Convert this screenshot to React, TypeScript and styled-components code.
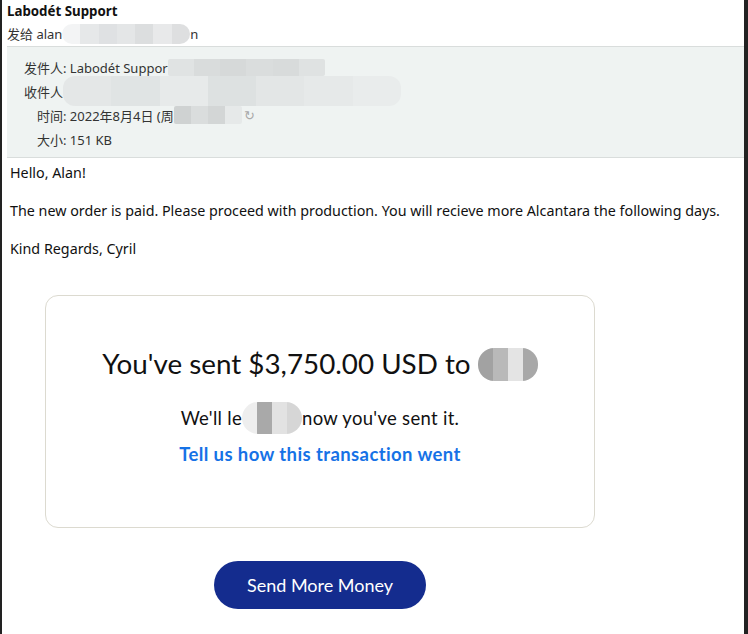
import React from 'react';
import styled, { createGlobalStyle } from 'styled-components';

const GlobalStyle = createGlobalStyle`
  html, body {
    margin: 0;
    padding: 0;
    background: #fff;
  }
  body {
    font-family: 'Noto Sans', 'Noto Sans CJK SC', sans-serif;
    color: #1a1a1a;
  }
`;

const Page = styled.div`
  height: 634px;
  box-sizing: border-box;
  border-left: 2px solid #222;
  border-right: 4px solid #222;
  background: #fff;
  overflow: hidden;
  display: flex;
  flex-direction: column;
`;

const MailHead = styled.div`
  padding: 0 0 0 5px;
`;

const SenderName = styled.div`
  font-size: 13.3px;
  font-weight: 700;
  line-height: 20px;
  margin-top: 1px;
  color: #111;
`;

const SentTo = styled.div`
  font-size: 13px;
  line-height: 22px;
  color: #333;
  display: flex;
  align-items: center;
  height: 25px;
`;

const MetaBox = styled.div`
  margin-left: 5px;
  background: #eff3f2;
  border-top: 1px solid #d9dddc;
  border-bottom: 1px solid #d9dddc;
  padding: 8px 0 6px;
`;

const MetaRow = styled.div<{ $indent: number }>`
  height: 24px;
  display: flex;
  align-items: center;
  padding-left: ${(p) => p.$indent}px;
  font-size: 13px;
  color: #333;
  white-space: nowrap;
`;

const Blur = styled.span<{ $w: number; $h: number; $tones: string[]; $round?: number }>`
  display: inline-block;
  width: ${(p) => p.$w}px;
  height: ${(p) => p.$h}px;
  border-radius: ${(p) => p.$round ?? 10}px;
  background: linear-gradient(
    to right,
    ${(p) =>
      p.$tones
        .map((c, i, a) => `${c} ${(i / a.length) * 100}%, ${c} ${((i + 1) / a.length) * 100}%`)
        .join(', ')}
  );
  flex-shrink: 0;
`;

const Body = styled.div`
  padding: 5px 0 0 8px;
  font-size: 14.3px;
  line-height: 20px;
  color: #111;
  p {
    margin: 0 0 18px;
  }
`;

const Content = styled.div`
  margin-left: 43px;
  width: 550px;
  margin-top: 18px;
  display: flex;
  flex-direction: column;
  align-items: center;
`;

const Card = styled.div`
  width: 100%;
  box-sizing: border-box;
  border: 1px solid #dcdad0;
  border-radius: 13px;
  padding: 51px 20px 61px;
  display: flex;
  flex-direction: column;
  align-items: center;
  font-family: Lato, 'Noto Sans', sans-serif;
  color: #111;
`;

const Heading = styled.div`
  font-size: 27.8px;
  line-height: 34px;
  display: flex;
  align-items: center;
  white-space: pre;
`;

const Note = styled.div`
  margin-top: 21px;
  font-size: 18.5px;
  letter-spacing: 0.3px;
  line-height: 24px;
  display: flex;
  align-items: center;
  white-space: pre;
`;

const FeedbackLink = styled.a`
  margin-top: 8px;
  font-size: 18.5px;
  letter-spacing: 0.4px;
  line-height: 24px;
  font-weight: 700;
  color: #1672e6;
  text-decoration: none;
`;

const SendButton = styled.button`
  margin-top: 33px;
  width: 212px;
  height: 48px;
  border: none;
  border-radius: 24px;
  background: #142c8e;
  color: #fff;
  font-family: Lato, 'Noto Sans', sans-serif;
  font-size: 18px;
  cursor: pointer;
`;

const App: React.FC = () => {
  return (
    <>
      <GlobalStyle />
      <Page>
        <MailHead>
          <SenderName>Labodét Support</SenderName>
          <SentTo>
            发给 alan
            <Blur $w={128} $h={20} $round={10} $tones={['#f3f4f5', '#e6e8e9', '#dfe1e3', '#e4e6e7', '#dcdedf', '#e8e9ea', '#dedfe0']} />
            n
          </SentTo>
        </MailHead>

        <MetaBox>
          <MetaRow $indent={17}>
            发件人: Labodét Suppor
            <Blur $w={157} $h={17} $round={2} $tones={['#e0e3e3', '#d9dcdc', '#d6d9d9', '#dadddd', '#d8dbdb', '#dfe2e2']} />
          </MetaRow>
          <MetaRow $indent={17}>
            收件人
            <Blur $w={338} $h={30} $round={12} $tones={['#e4e7e7', '#e0e4e4', '#e7eaea', '#dde1e1', '#e3e6e6', '#e6e9e9', '#e9ecec']} />
          </MetaRow>
          <MetaRow $indent={30}>
            时间: 2022年8月4日 (周
            <Blur $w={68} $h={18} $round={2} $tones={['#cfd2d2', '#dadddd', '#d3d6d6', '#e6e9e9']} />
            <span style={{ color: '#aaa', marginLeft: 2 }}>↻</span>
          </MetaRow>
          <MetaRow $indent={30}>大小: 151 KB</MetaRow>
        </MetaBox>

        <Body>
          <p>Hello, Alan!</p>
          <p>The new order is paid. Please proceed with production. You will recieve more Alcantara the following days.</p>
          <p>Kind Regards, Cyril</p>
        </Body>

        <Content>
          <Card>
            <Heading>
              You've sent $3,750.00 USD to{' '}
              <Blur $w={60} $h={33} $round={16} $tones={['#a2a2a2', '#b9b9b9', '#e4e4e4', '#a8a8a8']} />
            </Heading>
            <Note>
              We'll le
              <Blur $w={60} $h={32} $round={16} $tones={['#eeeeee', '#a9a9a9', '#e2e2e2', '#d6d6d6']} />
              now you've sent it.
            </Note>
            <FeedbackLink href="#">Tell us how this transaction went</FeedbackLink>
          </Card>
          <SendButton>Send More Money</SendButton>
        </Content>
      </Page>
    </>
  );
};

export default App;
